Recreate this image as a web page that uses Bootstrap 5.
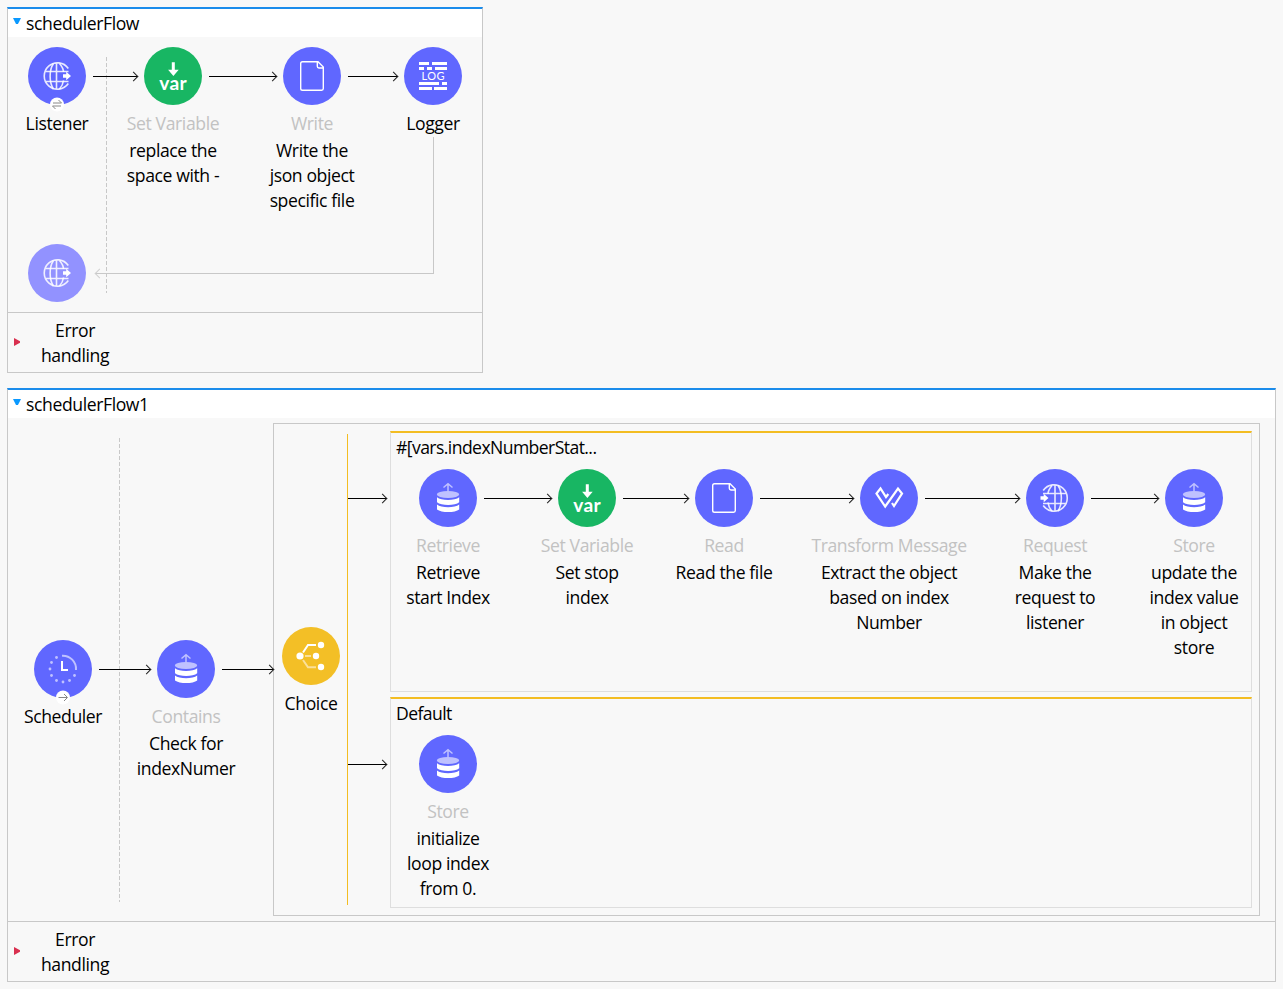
<!DOCTYPE html>
<html lang="en">
<head>
<meta charset="utf-8">
<title>schedulerFlow</title>
<link rel="stylesheet" href="https://cdn.jsdelivr.net/npm/bootstrap@5.3.0/dist/css/bootstrap.min.css">
<script src="https://cdn.jsdelivr.net/npm/bootstrap@5.3.0/dist/js/bootstrap.bundle.min.js"></script>
<style>
body{background:#f8f8f8;color:#000;font:17.6px/25px "Open Sans","Noto Sans",sans-serif;letter-spacing:-.4px;padding:7px 7px 0;height:989px;overflow:hidden}
.flow{border:1px solid #c8c8c8;border-top:2px solid #1b8ceb;margin-bottom:15px}
.flow-title{height:28px;background:#fff;padding-left:5px}
.tri-down{width:8px;height:6px;flex:none;background:#0a99ff;clip-path:polygon(0 0,100% 0,62% 100%,38% 100%);margin:-4px 5px 0 0}
.tri-right{width:6px;height:8px;flex:none;background:#d9304f;clip-path:polygon(0 0,100% 40%,100% 60%,0 100%);margin:-1px 0 0 6px}
.flow-body{padding-left:20px}
.errors{height:60px;border-top:1px solid #c8c8c8}
.errors p{width:70px;margin-left:20px}
.step{width:58px;flex:none;height:58px}
.disc{width:58px;height:58px;flex:none;display:block;margin-bottom:6px;overflow:visible}
.step span{white-space:nowrap;text-align:center}
.kind{color:#c2c2c2;margin-bottom:2px}
.wire{height:1px;background:#000;margin:29px 6px 0 7px;flex:none;position:relative;z-index:1}
.wire::after{content:"";position:absolute;right:1px;top:-3px;width:7px;height:7px;border:solid #222;border-width:1px 1px 0 0;transform:rotate(45deg)}
.divider{width:1px;background:repeating-linear-gradient(#c8c8c8 0 4px,transparent 4px 6px)}
.back{left:87px;top:100px;width:339px;height:137px;border:solid #c8c8c8;border-width:0 1px 1px 0}
.back::before{content:"";position:absolute;left:1px;bottom:-4px;width:7px;height:7px;border:solid #d0d0d0;border-width:0 0 1px 1px;transform:rotate(45deg)}
.choice-box{width:987px;height:493px;border:1px solid #c8c8c8;margin-top:5px}
.split{width:1px;height:471px;background:#f3bd22;margin:10px 0 0 7px}
.split-wires{width:40px}
.scope{width:862px;border:1px solid #dedede;border-top:2px solid #f3bd22;padding-left:5px}
.scope-title{padding-top:2px;letter-spacing:-.58px}
.scope-steps{padding-left:23px;margin-top:9px}
</style>
</head>
<body>
<svg class="d-none">
<defs>
<g id="globe-lines" fill="none" stroke="#fff" stroke-opacity=".85" stroke-width="1.6">
<path d="M40.300 21.500A13.200 13.200 0 1 0 40.300 36.500M28.500 16v26.500M17.500 24.500h23M17.500 34.500h23"/><path d="M25.500 16.500C21 23 21 35.500 25.500 42M31.500 16.500C34.500 20 35.500 22.500 35.500 25M35.500 33.500C35 37 34 39.500 31.500 42"/></g>
<path id="globe-arrow" d="M35 27.300h3.200v-2.500L43 29l-4.800 4.200v-2.500H35z" fill="#fff"/>
<g id="globe"><use href="#globe-lines"/><use href="#globe-arrow"/></g>
<g id="file" fill="none" stroke="#fff" stroke-width="1.400"><path d="M19.500 14.700H35l5.300 5.300v21.600q0 1.700-1.700 1.700H19.500q-1.800 0-1.800-1.800V16.500q0-1.800 1.800-1.800zM34.300 15v4.300q0 1.700 1.700 1.700h4"/></g>
<g id="store"><path d="M29 27V15.500M24.500 18.500L29 14.700l4.500 3.800" fill="none" stroke="#bfc1ff" stroke-width="1.500"/><ellipse cx="29" cy="25.500" rx="11.200" ry="3.400" fill="#bfc1ff"/><path d="M18 28.300c4 3.500 18 3.500 22.200 0v5c-4 3.500-18 3.500-22.200 0zM18 35.500c4 3.500 18 3.500 22.200 0v5c-4 3.400-18 3.400-22.200 0z" fill="#fff"/></g>
<g id="var"><path d="M27.800 15.300h3v7.500h3.900L29.400 29l-5.300-6.200h3.700z" fill="#fff"/><text x="15.200" y="43" textLength="28" lengthAdjust="spacingAndGlyphs" font-family="Lato" font-weight="700" font-size="18.500" letter-spacing=".4" fill="#fff">var</text></g>
</defs></svg>

<section class="flow" style="width:476px">
<header class="flow-title d-flex align-items-center"><i class="tri-down"></i>schedulerFlow</header>
<div class="flow-body position-relative d-flex flex-column" style="height:275px;padding-top:10px">
<div class="d-flex">
<div class="step d-flex flex-column align-items-center"><svg class="disc"><circle cx="29" cy="29" r="29" fill="#6067ff"/><use href="#globe"/><circle cx="29" cy="57.500" r="7" fill="#fff"/><path d="M25 56h8.500l-3-3M33 59h-8.500l3 3" fill="none" stroke="#888"/></svg><span>Listener</span></div>
<i class="wire" style="width:45px"></i>
<div class="step d-flex flex-column align-items-center"><svg class="disc"><circle cx="29" cy="29" r="29" fill="#18b663"/><use href="#var"/></svg><span class="kind">Set Variable</span><span>replace the<br>space with -</span></div>
<i class="wire" style="width:68px"></i>
<div class="step d-flex flex-column align-items-center"><svg class="disc"><circle cx="29" cy="29" r="29" fill="#6067ff"/><use href="#file"/></svg><span class="kind">Write</span><span>Write the<br>json object<br>specific file</span></div>
<i class="wire" style="width:50px"></i>
<div class="step d-flex flex-column align-items-center"><svg class="disc"><circle cx="29" cy="29" r="29" fill="#6067ff"/><path d="M15 16.500h10m3 0h15M15 21.500h5m3 0h5m3 0h12M15 36.500h20m3 0h5M15 41.500h13m2 0h13" stroke="#fff" stroke-width="3"/><text x="17.500" y="33" textLength="23" font-family="Lato" font-size="11" letter-spacing="0" fill="#fff">LOG</text></svg><span>Logger</span></div>
</div>
<div class="step mt-auto" style="margin-bottom:10px"><svg class="disc"><circle cx="29" cy="29" r="29" fill="#9292ff"/><use href="#globe"/></svg></div>
<i class="divider position-absolute" style="left:98px;top:20px;height:236px"></i>
<i class="back position-absolute"></i>
</div>
<footer class="errors d-flex align-items-center"><i class="tri-right"></i><p class="mb-0 text-center">Error handling</p></footer>
</section>

<section class="flow" style="width:1269px">
<header class="flow-title d-flex align-items-center"><i class="tri-down"></i>schedulerFlow1</header>
<div class="flow-body position-relative d-flex" style="height:503px;padding-left:26px">
<div class="d-flex" style="margin-top:222px">
<div class="step d-flex flex-column align-items-center"><svg class="disc"><circle cx="29" cy="29" r="29" fill="#6067ff"/><path d="M28 15.700A13.300 13.300 0 0 1 42 30" fill="none" stroke="#bfc1ff" stroke-width="2"/><g fill="#bfc1ff"><circle cx="40.500" cy="35.500" r="1.400"/><circle cx="35.500" cy="40.500" r="1.400"/><circle cx="29" cy="42" r="1.400"/><circle cx="22.500" cy="40.500" r="1.400"/><circle cx="17.500" cy="35.500" r="1.400"/><circle cx="16" cy="29" r="1.400"/><circle cx="17.500" cy="22.500" r="1.400"/><circle cx="22.500" cy="17.500" r="1.400"/></g><path d="M28 21V30h6" fill="none" stroke="#fff" stroke-width="2"/><circle cx="29" cy="57.500" r="7" fill="#fff"/><path d="M24.500 57.500h8.500M30 54l3.500 3.500L30 61" fill="none" stroke="#888"/></svg><span>Scheduler</span></div>
<i class="wire" style="width:52px"></i>
<div class="step d-flex flex-column align-items-center"><svg class="disc"><circle cx="29" cy="29" r="29" fill="#6067ff"/><use href="#store"/></svg><span class="kind">Contains</span><span>Check for<br>indexNumer</span></div>
<i class="wire" style="width:52px;margin-right:-1px"></i>
</div>
<div class="choice-box d-flex">
<div class="step d-flex flex-column align-items-center" style="margin:203px 0 0 8px"><svg class="disc"><circle cx="29" cy="29" r="29" fill="#f3bf26"/><path d="M21 25.500L26 18h8" fill="none" stroke="#fff" stroke-width="2"/><path d="M23 29h6M21 33l5 7.200h8" fill="none" stroke="#fae09a" stroke-width="2"/><g fill="#fff"><circle cx="18" cy="29" r="3.600"/><circle cx="34" cy="29" r="3.200"/><circle cx="39" cy="18" r="3.200"/><circle cx="39" cy="40" r="3.200"/></g></svg><span>Choice</span></div>
<i class="split"></i>
<div class="split-wires flex-shrink-0"><i class="wire d-block ms-0 me-0" style="width:39px;margin-top:74px"></i><i class="wire d-block ms-0 me-0" style="width:39px;margin-top:265px"></i></div>
<div class="d-flex flex-column" style="margin:7px 0 0 2px;gap:5px">
<div class="scope" style="height:261px"><div class="scope-title">#[vars.indexNumberStat...</div>
<div class="scope-steps d-flex">
<div class="step d-flex flex-column align-items-center"><svg class="disc"><circle cx="29" cy="29" r="29" fill="#6067ff"/><use href="#store"/></svg><span class="kind">Retrieve</span><span>Retrieve<br>start Index</span></div>
<i class="wire" style="width:68px"></i>
<div class="step d-flex flex-column align-items-center"><svg class="disc"><circle cx="29" cy="29" r="29" fill="#18b663"/><use href="#var"/></svg><span class="kind">Set Variable</span><span>Set stop<br>index</span></div>
<i class="wire" style="width:66px"></i>
<div class="step d-flex flex-column align-items-center"><svg class="disc"><circle cx="29" cy="29" r="29" fill="#6067ff"/><use href="#file"/></svg><span class="kind">Read</span><span>Read the file</span></div>
<i class="wire" style="width:94px"></i>
<div class="step d-flex flex-column align-items-center"><svg class="disc"><circle cx="29" cy="29" r="29" fill="#6067ff"/><path d="M28.300 25L26 28l-5.500-8.500-4 5 8.700 13L38 19.500l4 5-8 12.500-2-3" fill="none" stroke="#fff" stroke-width="2.200"/></svg><span class="kind">Transform Message</span><span>Extract the object<br>based on index<br>Number</span></div>
<i class="wire" style="width:95px"></i>
<div class="step d-flex flex-column align-items-center"><svg class="disc"><circle cx="29" cy="29" r="29" fill="#6067ff"/><use href="#globe-lines" transform="translate(57.500) scale(-1 1)"/><use href="#globe-arrow" transform="translate(-20.500)"/></svg><span class="kind">Request</span><span>Make the<br>request to<br>listener</span></div>
<i class="wire" style="width:68px"></i>
<div class="step d-flex flex-column align-items-center"><svg class="disc"><circle cx="29" cy="29" r="29" fill="#6067ff"/><use href="#store"/></svg><span class="kind">Store</span><span>update the<br>index value<br>in object<br>store</span></div>
</div></div>
<div class="scope" style="height:211px"><div class="scope-title">Default</div>
<div class="scope-steps d-flex">
<div class="step d-flex flex-column align-items-center"><svg class="disc"><circle cx="29" cy="29" r="29" fill="#6067ff"/><use href="#store"/></svg><span class="kind">Store</span><span>initialize<br>loop index<br>from 0.</span></div>
</div></div>
</div>
</div>
<i class="divider position-absolute" style="left:111px;top:20px;height:464px"></i>
</div>
<footer class="errors d-flex align-items-center"><i class="tri-right"></i><p class="mb-0 text-center">Error handling</p></footer>
</section>
</body>
</html>
